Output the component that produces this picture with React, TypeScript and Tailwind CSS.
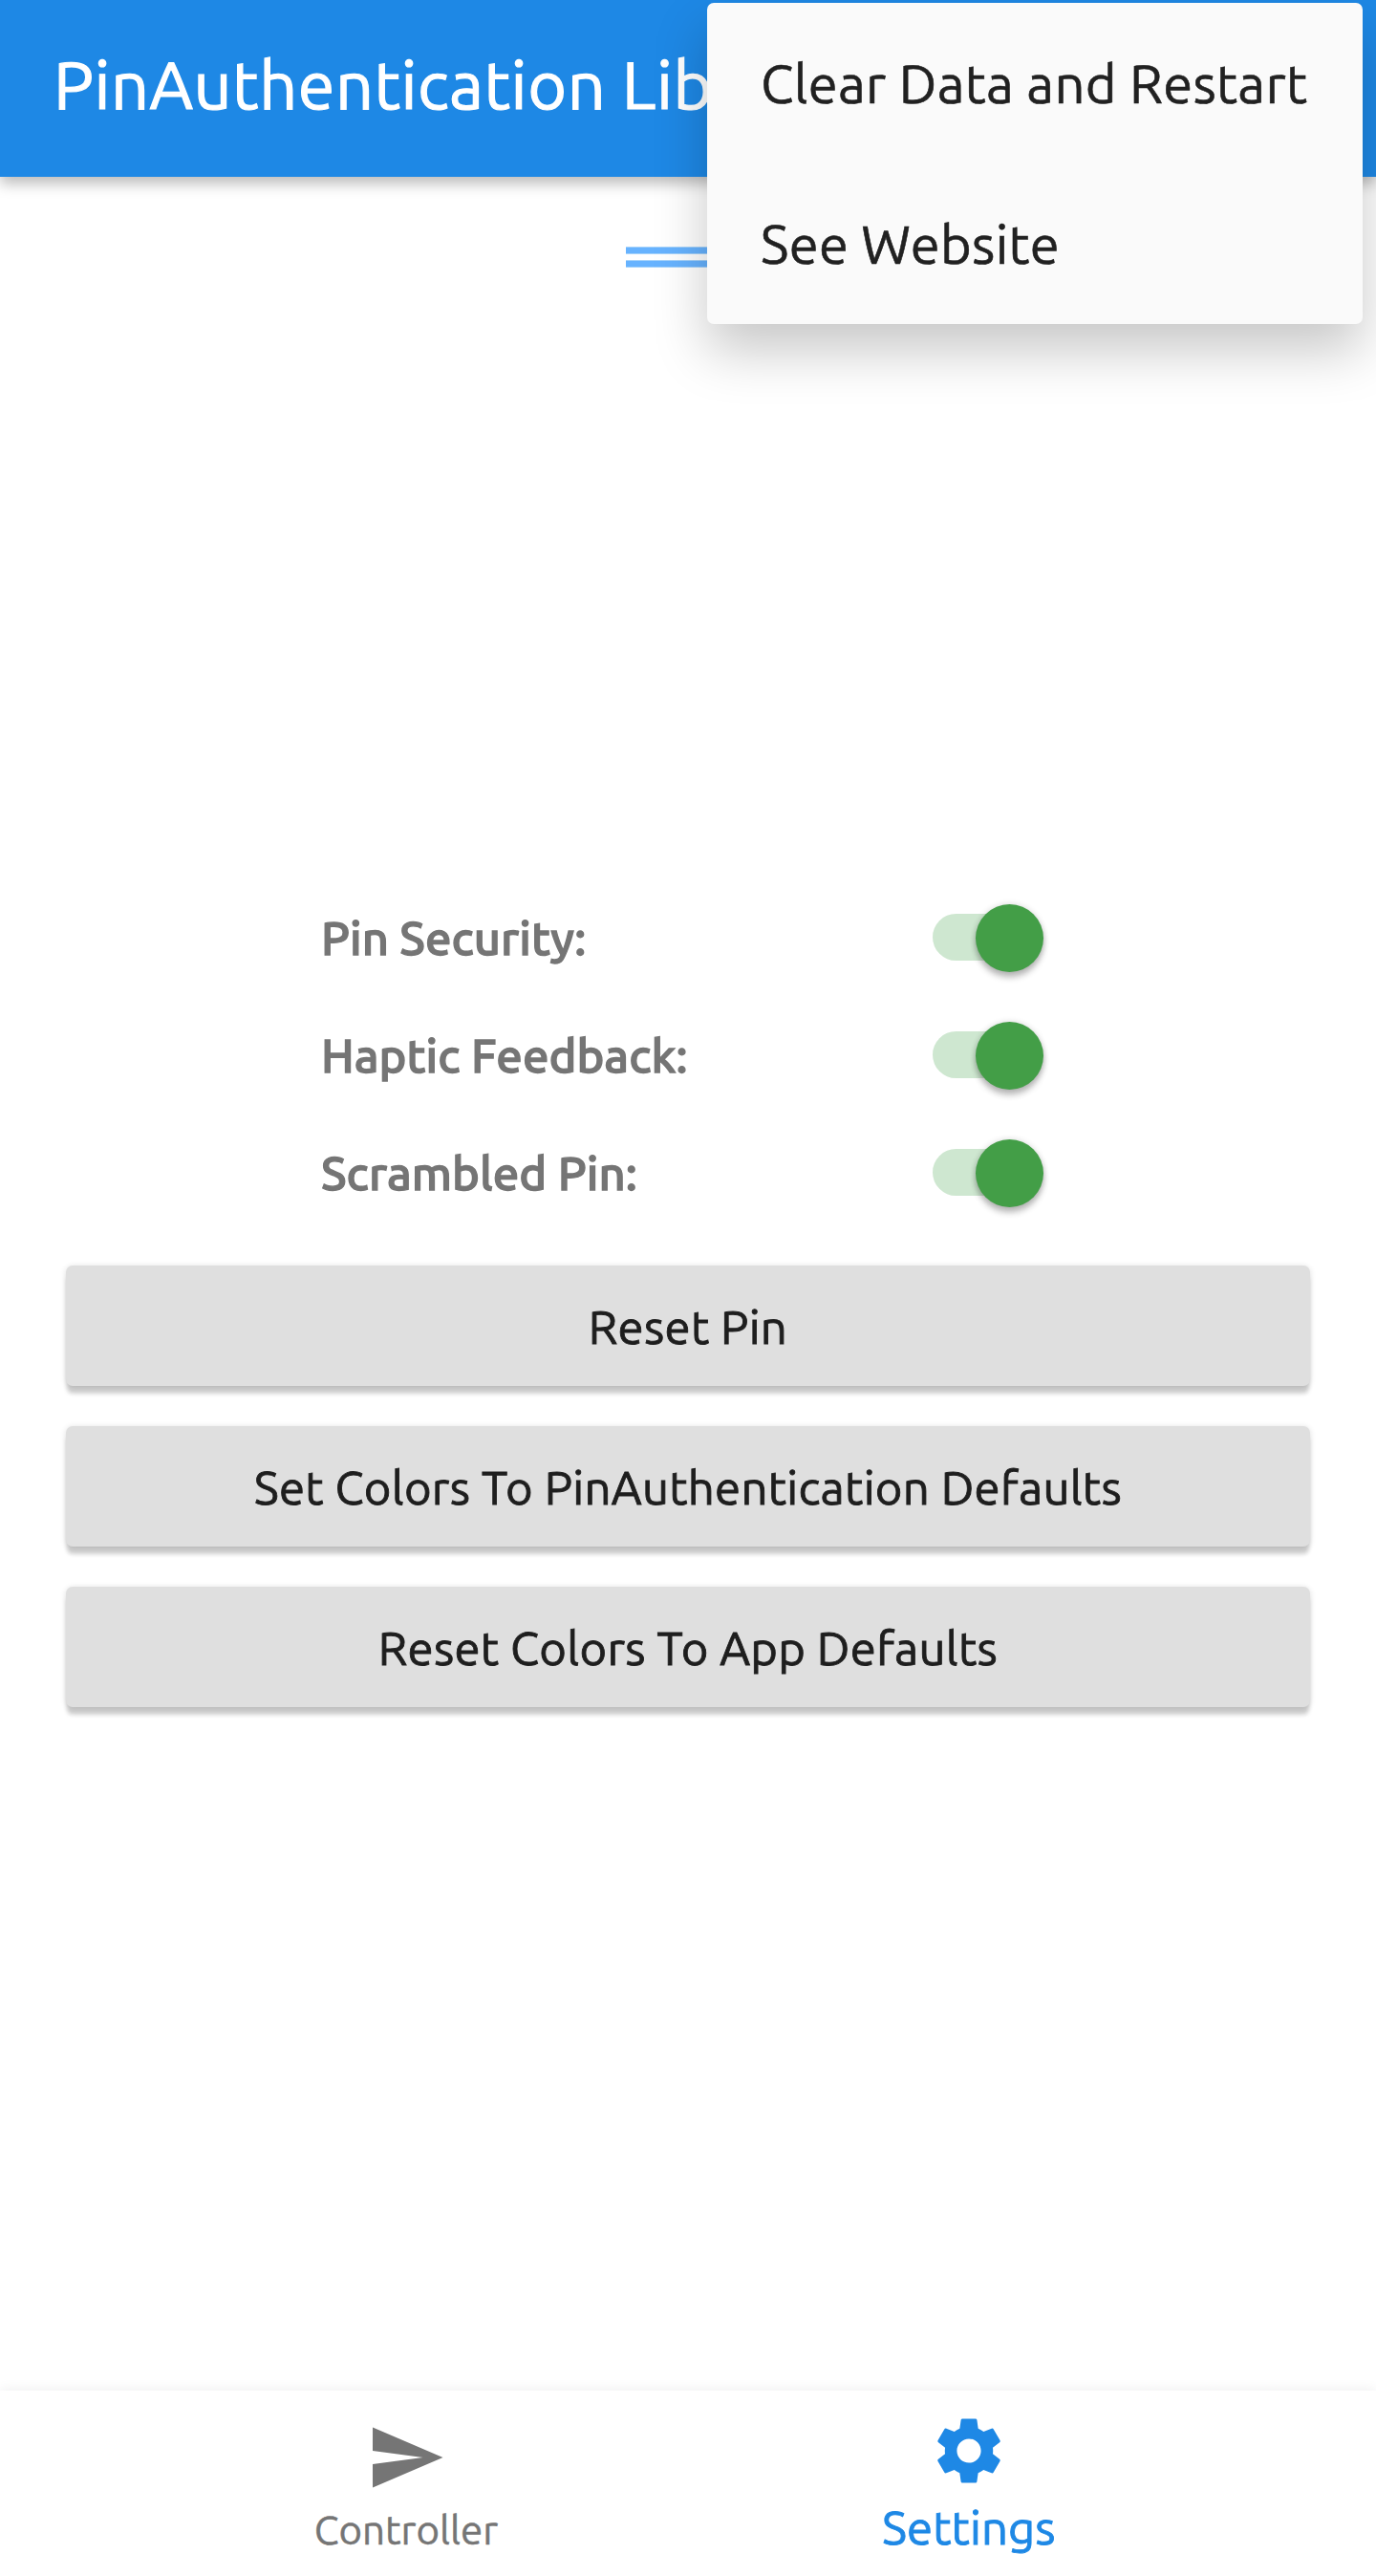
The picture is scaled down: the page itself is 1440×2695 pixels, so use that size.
import { MdSend, MdSettings } from 'react-icons/md';

const settings = ['Pin Security:', 'Haptic Feedback:', 'Scrambled Pin:'];

const actions = [
  'Reset Pin',
  'Set Colors To PinAuthentication Defaults',
  'Reset Colors To App Defaults',
];

const menuItems = ['Clear Data and Restart', 'See Website'];

function Switch() {
  return (
    <span role="switch" aria-checked="true" className="flex h-[71px] w-[116px] items-center justify-end">
      <span className="mb-0.5 h-[49px] w-[94px] shrink-0 rounded-l-full bg-[#cee7d0]" />
      <span className="-ml-[49px] size-[71px] shrink-0 rounded-full bg-[#439e47] shadow-[0_6px_6px_rgba(0,0,0,0.24),0_0_6px_rgba(0,0,0,0.16)]" />
    </span>
  );
}

function SettingRow({ label }: { label: string }) {
  return (
    <div className="flex h-[123px] items-center justify-between">
      <span className="mb-0.5 text-[49px] leading-[55px] font-medium text-[#757575] [-webkit-text-stroke:1.3px]">{label}</span>
      <Switch />
    </div>
  );
}

function ActionButton({ label }: { label: string }) {
  return (
    <button className="flex h-[126px] w-full items-center justify-center rounded-[7px] bg-[#dfdfdf] text-[49px] leading-[55px] tracking-[0.32px] text-[#1e1e1e] shadow-[0_9px_4px_-1px_rgba(0,0,0,0.19),0_1px_6px_rgba(0,0,0,0.14)] [-webkit-text-stroke:0.9px]">
      {label}
    </button>
  );
}

function OverflowMenu() {
  return (
    <div className="absolute top-[3px] left-[740px] z-20 w-[686px] rounded-[7px] bg-[#fafafa] shadow-[0_28px_56px_rgba(0,0,0,0.22)]">
      {menuItems.map((item) => (
        <div key={item} className="flex h-[168px] items-center px-14 text-[56px] leading-[63px] tracking-[0.34px] whitespace-nowrap text-[#212121] [-webkit-text-stroke:0.6px]">
          {item}
        </div>
      ))}
    </div>
  );
}

export default function App() {
  return (
    <div className="relative flex h-[2695px] w-[1440px] flex-col overflow-hidden bg-white font-['Ubuntu','Noto_Sans',sans-serif]">
      <header className="z-10 flex h-[185px] shrink-0 items-center bg-[#1e88e5] px-14 pb-[9px] shadow-[0_7px_14px_rgba(0,0,0,0.27)]">
        <h1 className="text-[70px] leading-[78px] tracking-[0.56px] whitespace-nowrap text-white [-webkit-text-stroke:1.2px]">
          PinAuthentication Lib
        </h1>
      </header>
      <OverflowMenu />

      <main className="flex flex-1 flex-col pt-[73px]">
        <div className="mx-auto flex w-[130px] flex-col gap-1.5">
          <span className="h-2 border-y border-[#a6d3fb] bg-[#67b3ff]" />
          <span className="h-2 border-y border-[#a6d3fb] bg-[#67b3ff]" />
        </div>

        <section className="mt-[640px] mr-[348px] ml-[336px] flex flex-col">
          {settings.map((label) => (
            <SettingRow key={label} label={label} />
          ))}
        </section>

        <section className="mx-[69px] mt-[35px] flex flex-col gap-[42px]">
          {actions.map((label) => (
            <ActionButton key={label} label={label} />
          ))}
        </section>
      </main>

      <nav className="flex h-[194px] shrink-0 justify-center bg-white shadow-[0_-1px_12px_rgba(0,0,0,0.07)]">
        <a className="flex w-[588px] flex-col items-center gap-2.5 pt-7 text-[#757575]">
          <MdSend className="mr-0.5 size-[84px]" />
          <span className="mr-0.5 text-[42px] leading-[47px] [-webkit-text-stroke:0.5px]">Controller</span>
        </a>
        <a className="flex w-[588px] flex-col items-center gap-2.5 pt-[21px] text-[#1e88e5]">
          <MdSettings className="size-[84px]" />
          <span className="text-[49px] leading-[55px] tracking-[0.1px] [-webkit-text-stroke:0.9px]">Settings</span>
        </a>
      </nav>
    </div>
  );
}
